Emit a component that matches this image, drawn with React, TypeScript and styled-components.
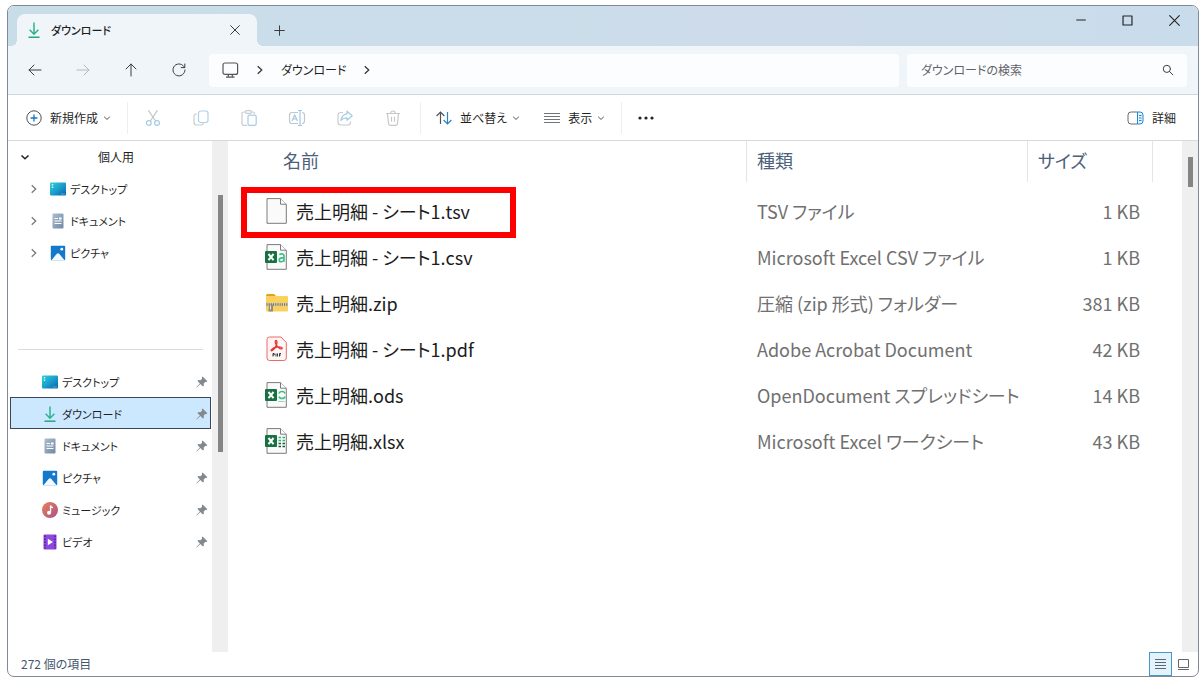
import React from "react";
import styled, { createGlobalStyle, css } from "styled-components";

const GlobalStyle = createGlobalStyle`
  *, *::before, *::after { box-sizing: border-box; }
  body {
    margin: 0;
    background: #ffffff;
    color: #1f1f1f;
    font-family: "Noto Sans CJK JP", "Noto Sans", sans-serif;
    font-size: 12px;
    line-height: 16px;
    font-feature-settings: "palt";
  }
  button, input {
    font: inherit;
    font-feature-settings: inherit;
    color: inherit;
    padding: 0;
    margin: 0;
    border: 0;
    background: none;
  }
  a { color: inherit; text-decoration: none; }
  ul { list-style: none; margin: 0; padding: 0; }
  svg { display: block; flex: none; }
`;

const Page = styled.div`
  min-height: 100vh;
  padding: 5px 5px 6px 7px;
  display: flex;
`;

const Window = styled.div`
  flex: 1;
  min-width: 0;
  display: flex;
  flex-direction: column;
  border: 1px solid #7f8a94;
  border-radius: 7px;
  overflow: hidden;
  background: #ffffff;
`;

/* Title bar */

const TitleBar = styled.header`
  height: 40px;
  display: flex;
  align-items: stretch;
  background: linear-gradient(90deg, #c9dde9 0%, #cbddea 45%, #cedbea 62%, #c9dceb 100%);
`;

const Tab = styled.div`
  position: relative;
  width: 240px;
  margin: 8px 0 0 9px;
  padding: 0 17px 0 9px;
  display: flex;
  align-items: center;
  gap: 9px;
  border-radius: 8px 8px 0 0;
  background: #eff5f9;

  &::before,
  &::after {
    content: "";
    position: absolute;
    bottom: 0;
    width: 6px;
    height: 6px;
  }
  &::before {
    right: 100%;
    background: radial-gradient(circle at 0 0, transparent 6px, #eff5f9 6px);
  }
  &::after {
    left: 100%;
    background: radial-gradient(circle at 100% 0, transparent 6px, #eff5f9 6px);
  }
`;

const TabTitle = styled.span`
  flex: 1;
  font-size: 11px;
  font-weight: 500;
`;

const BareButton = styled.button`
  display: flex;
  align-items: center;
  justify-content: center;
`;

const NewTabButton = styled(BareButton)`
  width: 32px;
  margin: 8px 0 0 6px;
`;

const CaptionButtons = styled.div`
  display: flex;
  margin-left: auto;
  height: 28px;
`;

const CaptionButton = styled(BareButton)`
  width: 47px;
`;

/* Address bar */

const AddressBar = styled.div`
  height: 49px;
  padding: 0 11px 0 3px;
  display: flex;
  align-items: center;
  border-bottom: 1px solid #cdd8df;
  background: #eff5f9;
`;

const NavButtons = styled.div`
  display: flex;
`;

const NavButton = styled(BareButton)`
  width: 48px;
  height: 32px;
`;

const Breadcrumb = styled.nav`
  flex: 1;
  height: 33px;
  margin-left: 6px;
  padding-left: 13px;
  display: flex;
  align-items: center;
  gap: 16px;
  border-radius: 4px;
  background: #fbfdfe;
`;

const SearchBox = styled.label`
  width: 280px;
  height: 33px;
  margin-left: 8px;
  padding: 0 13px 0 14px;
  display: flex;
  align-items: center;
  border-radius: 4px;
  background: #fbfdfe;
`;

const SearchInput = styled.input`
  flex: 1;
  min-width: 0;
  outline: none;

  &::placeholder {
    color: #5f6367;
    opacity: 1;
  }
`;

/* Command bar */

const CommandBar = styled.div`
  height: 46px;
  padding: 1px 22px 0 18px;
  display: flex;
  align-items: center;
  border-bottom: 1px solid #d3dae0;
`;

const CommandButton = styled(BareButton)`
  height: 32px;
  gap: 8px;
`;

const MenuLabel = styled.span`
  display: flex;
  align-items: center;
  gap: 5px;
`;

const IconCommand = styled(BareButton)`
  width: 48px;
  height: 32px;
`;

const Divider = styled.span<{ $before: number; $after: number }>`
  width: 1px;
  height: 32px;
  margin: 0 ${(p) => p.$after}px 0 ${(p) => p.$before}px;
  background: #eceeef;
`;

const Spacer = styled.span<{ $width?: number }>`
  ${(p) => (p.$width ? css`width: ${p.$width}px;` : css`flex: 1;`)}
`;

/* Body */

const Body = styled.div`
  flex: 1;
  display: flex;
`;

const Sidebar = styled.nav`
  width: 204px;
  padding-right: 1px;
`;

const ScrollTrack = styled.div<{ $top: number; $size: number }>`
  width: 16px;
  padding-top: ${(p) => p.$top}px;
  background: #efefef;

  &::before {
    content: "";
    display: block;
    width: 5px;
    height: ${(p) => p.$size}px;
    margin: 0 auto;
    background: #858585;
  }
`;

const GroupHeader = styled.button`
  width: 100%;
  height: 32px;
  padding-left: 12px;
  display: flex;
  align-items: center;
  gap: 68px;
`;

const TreeItem = styled.li`
  height: 32px;
  padding-left: 21px;
  display: flex;
  align-items: center;
  gap: 11px;
  font-size: 11px;
`;

const TreeLink = styled.a`
  display: flex;
  align-items: center;
  gap: 4px;
`;

const SidebarRule = styled.hr`
  margin: 80px 8px 15px 10px;
  border: 0;
  border-top: 1px solid #dcdcdc;
`;

const QuickLink = styled.a<{ $selected?: boolean }>`
  height: 32px;
  margin-left: 2px;
  padding: 1px 2px 0 31px;
  display: flex;
  align-items: center;
  gap: 4px;
  border: 1px solid ${(p) => (p.$selected ? "#3b4650" : "transparent")};
  background: ${(p) => (p.$selected ? "#cce8ff" : "transparent")};
  font-size: 11px;
`;

const QuickLabel = styled.span`
  flex: 1;
`;

const Files = styled.main`
  flex: 1;
  min-width: 0;
`;

/* File table */

const FileTable = styled.table`
  width: 100%;
  table-layout: fixed;
  border-collapse: collapse;
  font-size: 18px;
  line-height: 24px;
  color: #707070;
`;

const Col = styled.col<{ $width?: number }>`
  ${(p) => p.$width && css`width: ${p.$width}px;`}
`;

const HeadCell = styled.th`
  height: 48px;
  padding: 0;
  vertical-align: top;
  text-align: left;
  font-weight: 400;
  color: #4c607a;
`;

const HeadLabel = styled.span<{ $indent: number }>`
  height: 41px;
  padding: 0 0 3px ${(p) => p.$indent}px;
  display: flex;
  align-items: center;
  border-right: 1px solid #e3e5e8;
`;

const Cell = styled.td<{ $numeric?: boolean }>`
  height: 46px;
  padding: 0 ${(p) => (p.$numeric ? 13 : 0)}px 2px ${(p) => (p.$numeric ? 0 : 10)}px;
  text-align: ${(p) => (p.$numeric ? "right" : "left")};
  white-space: nowrap;
`;

const NameCell = styled(Cell)`
  position: relative;
  padding-left: 36px;
`;

const FileLink = styled.a`
  display: flex;
  align-items: center;
  gap: 8px;
  color: #1c1c1c;
`;

const Highlight = styled.span`
  position: absolute;
  top: -2px;
  left: 13px;
  width: 275px;
  height: 51px;
  border: 6px solid #fe0000;
  pointer-events: none;
`;

/* Status bar */

const StatusBar = styled.footer`
  height: 24px;
  padding: 0 3px 0 13px;
  display: flex;
  align-items: center;
  color: #44556e;
`;

const ViewButton = styled(BareButton)<{ $active?: boolean }>`
  width: 23px;
  height: 24px;
  border: 1px solid ${(p) => (p.$active ? "#4a97c2" : "transparent")};
  background: ${(p) => (p.$active ? "#e2f3fd" : "transparent")};
`;

/* Icons */

type StrokeProps = {
  d: string;
  size?: number;
  color?: string;
  width?: number;
};

const Stroke = ({ d, size = 16, color = "#3c3c3c", width = 1 }: StrokeProps) => (
  <svg width={size} height={size} viewBox="0 0 16 16" fill="none" stroke={color} strokeWidth={width} strokeLinecap="round" strokeLinejoin="round" aria-hidden="true">
    <path d={d} />
  </svg>
);

const Chevron = ({ dir, size = 8, color = "#555", width = 1 }: { dir: "down" | "right"; size?: number; color?: string; width?: number }) => (
  <svg width={size} height={size} viewBox="0 0 8 8" fill="none" stroke={color} strokeWidth={width} aria-hidden="true">
    <path d={dir === "down" ? "M1.2 2.8 4 5.4 6.800 2.800" : "M2.200 1 5.400 4 2.200 7"} />
  </svg>
);

const DownloadIcon = () => (
  <svg width="16" height="16" viewBox="0 0 16 16" fill="none" stroke="#2db391" strokeWidth="1.5" aria-hidden="true">
    <path d="M8 .5V12M3.6 7.8 8 12.2l4.4-4.4" />
    <path d="M2.5 15.2h11" stroke="#27a57f" />
  </svg>
);

const MonitorIcon = () => (
  <svg width="17" height="16" viewBox="0 0 17 16" fill="none" stroke="#555" strokeWidth="1.2" aria-hidden="true">
    <rect x="1" y="1" width="14.6" height="11.4" rx="2" />
    <path d="M6.3 12.5v2.3M10.3 12.5v2.3M4 15.2h8.6" />
  </svg>
);

const PlusCircleIcon = () => (
  <svg width="16" height="16" viewBox="0 0 16 16" fill="none" aria-hidden="true">
    <circle cx="8" cy="8" r="7.2" stroke="#4b5258" />
    <path d="M8 4.6v6.8M4.6 8h6.8" stroke="#1475c4" strokeWidth="1.3" />
  </svg>
);

const CutIcon = () => (
  <svg width="16" height="16" viewBox="0 0 16 16" fill="none" strokeWidth="1.2" aria-hidden="true">
    <path d="M3.4.3 10.6 11M12.4.3 5.4 11" stroke="#c3c6c9" />
    <circle cx="3.8" cy="13" r="2.4" stroke="#a5cbe8" />
    <circle cx="12" cy="13" r="2.4" stroke="#a5cbe8" />
  </svg>
);

const CopyIcon = () => (
  <svg width="16" height="16" viewBox="0 0 16 16" fill="none" strokeWidth="1.2" aria-hidden="true">
    <path d="M4 4H3.2Q1 4 1 6.2v6Q1 15 3.8 15h4.4q2 0 2.3-2" stroke="#c8cbce" />
    <rect x="5.5" y="1" width="9.5" height="11.5" rx="2.2" stroke="#aed1ec" />
  </svg>
);

const PasteIcon = () => (
  <svg width="16" height="16" viewBox="0 0 16 16" fill="none" strokeWidth="1.2" aria-hidden="true">
    <path d="M4.5 2H2.8Q1 2 1 3.8v9.7Q1 15.4 2.8 15.4H6M10.5 2h1.4q1.700 0 1.700 1.800" stroke="#c8cbce" />
    <rect x="4.5" y=".7" width="6" height="2.6" rx="1.2" stroke="#c8cbce" />
    <rect x="7" y="5.2" width="8.2" height="10.2" rx="1.6" stroke="#a5cbe8" />
  </svg>
);

const RenameIcon = () => (
  <svg width="18" height="16" viewBox="0 0 18 16" fill="none" strokeWidth="1.2" aria-hidden="true">
    <path d="M10 2.5H4Q1.5 2.5 1.5 5v6q0 2.5 2.5 2.5h6M14 2.5q2.5 0 2.5 2.5v6q0 2.5-2.5 2.5" stroke="#c3c6c9" />
    <path d="M4 11 6.7 5 9.4 11M5 9h3.4M12 .5v15M10 .5h4M10 15.5h4" stroke="#a0c8e8" />
  </svg>
);

const ShareIcon = () => (
  <svg width="16" height="16" viewBox="0 0 16 16" fill="none" strokeWidth="1.2" strokeLinejoin="round" aria-hidden="true">
    <path d="M6 2.500H4Q1 2.500 1 5.500v6.500q0 3 3 3h6.500q3 0 3-2.500v-1" stroke="#c8cbce" />
    <path d="M10 1.2 15.2 5.8 10 10.2V7.8Q6.300 7.600 4 10.500 4.800 4.600 10 3.900Z" stroke="#a5cbe8" />
  </svg>
);

const TrashIcon = () => (
  <svg width="16" height="16" viewBox="0 0 16 16" fill="none" stroke="#c6c8ca" strokeWidth="1.2" aria-hidden="true">
    <path d="M1 3.5h14M5.8 3.3Q5.8 1 8 1t2.2 2.3M2.5 3.6l1 9.6Q3.700 15.300 5.700 15.300h4.600q2 0 2.200-2.100l1-9.600M6.500 6.800v5M9.500 6.800v5" />
  </svg>
);

const SortIcon = () => (
  <svg width="16" height="14" viewBox="0 0 16 14" fill="none" strokeWidth="1.2" aria-hidden="true">
    <path d="M4.5 13V1.2M.6 5 4.5 1.100 8.400 5" stroke="#4f5357" />
    <path d="M11.5 1v11.8M7.6 9l3.900 3.900L15.400 9" stroke="#2f80c3" />
  </svg>
);

const LinesIcon = () => (
  <svg width="16" height="12" viewBox="0 0 16 12" stroke="#70757a" aria-hidden="true">
    <path d="M0 1.5h16M0 4.5h16M0 7.5h16M0 10.5h16" />
  </svg>
);

const DotsIcon = () => (
  <svg width="18" height="6" viewBox="0 0 18 6" fill="#222" aria-hidden="true">
    <circle cx="3" cy="3" r="1.6" />
    <circle cx="9" cy="3" r="1.6" />
    <circle cx="15" cy="3" r="1.6" />
  </svg>
);

const DetailsIcon = () => (
  <svg width="17" height="14" viewBox="0 0 17 14" fill="none" aria-hidden="true">
    <path d="M10.5 1H4Q1 1 1 4v6q0 3 3 3h6.5" stroke="#666b70" />
    <path d="M10.5 1H13q3 0 3 3v6q0 3-3 3h-2.500Z" stroke="#2487d2" fill="#e3f3ff" />
    <path d="M12 4.5h2.5M12 7h2.5M12 9.5h2.5" stroke="#2487d2" />
  </svg>
);

const DesktopIcon = () => (
  <svg width="16" height="16" viewBox="0 0 16 16" aria-hidden="true">
    <defs>
      <linearGradient id="desk" x1="0" y1="0" x2="1" y2="1">
        <stop offset="0" stopColor="#30cfd3" />
        <stop offset=".5" stopColor="#1a9fce" />
        <stop offset="1" stopColor="#0a62a9" />
      </linearGradient>
    </defs>
    <rect x="0" y="1.5" width="16" height="13" rx="1" fill="url(#desk)" />
    <path d="M1.8 3.7h1.4M1.8 6.3h1.4" stroke="#c9fbff" strokeWidth="1.4" />
    <path d="M11.5 13h1M13.5 13h1" stroke="#9fe0ff" />
  </svg>
);

const DocumentIcon = () => (
  <svg width="16" height="16" viewBox="0 0 16 16" aria-hidden="true">
    <defs>
      <linearGradient id="docu" x1="0" y1="0" x2="1" y2="1">
        <stop offset="0" stopColor="#adbfd0" />
        <stop offset="1" stopColor="#6f88a4" />
      </linearGradient>
    </defs>
    <rect x="2.5" y=".5" width="11" height="15" rx="1" fill="url(#docu)" />
    <path d="M4.5 5.5H8M4.5 8H11.5M4.5 10.5H11.5" stroke="#fff" />
    <rect x="9" y="4.5" width="2.6" height="2" fill="#fff" />
  </svg>
);

const PictureIcon = () => (
  <svg width="16" height="16" viewBox="0 0 16 16" aria-hidden="true">
    <rect x=".8" y=".8" width="14.4" height="14.4" rx="1" fill="#1478cb" />
    <path d="M1.5 15.2 6.6 9Q8 7.6 9.4 9l5.1 6.2Z" fill="#f3faff" />
    <circle cx="11.8" cy="4.2" r="1.4" fill="#f3faff" />
  </svg>
);

const MusicIcon = () => (
  <svg width="16" height="16" viewBox="0 0 16 16" aria-hidden="true">
    <defs>
      <linearGradient id="music" x1="0" y1="0" x2="1" y2="1">
        <stop offset="0" stopColor="#e98257" />
        <stop offset="1" stopColor="#a95188" />
      </linearGradient>
    </defs>
    <circle cx="8" cy="8" r="8" fill="url(#music)" />
    <path d="M8.5 10.5V3.5q.5 2 2.5 2.2" fill="none" stroke="#fff" strokeWidth="1.3" />
    <circle cx="7" cy="10.7" r="2" fill="#fff" />
  </svg>
);

const VideoIcon = () => (
  <svg width="16" height="16" viewBox="0 0 16 16" aria-hidden="true">
    <rect x="1.5" y=".5" width="13" height="15" rx="1" fill="#8d47dc" />
    <path d="M3 1.5v13M13 1.5v13" stroke="#4b1f91" strokeWidth="1.5" strokeDasharray="1.5 1.5" />
    <path d="M5.8 4.8 11 8l-5.2 3.2Z" fill="#fff" />
  </svg>
);

const PinIcon = () => (
  <svg width="12" height="12" viewBox="0 0 12 12" fill="#84898d" aria-hidden="true">
    <path d="M6.6.6 11.4 5.2 10.3 6.1 9.3 5.900 7.700 7.600 7.900 9.700 6.900 10.400 4.400 7.900 1 11.300.5 11.400.7 10.800 3.900 7.400 1.500 4.900 2.300 4 4.400 4.200 6.100 2.700 5.800 1.500Z" />
  </svg>
);

const Sheet = ({ children }: { children?: React.ReactNode }) => (
  <svg width="24" height="26" viewBox="0 0 24 26" fill="none" aria-hidden="true">
    <path d="M3 .6H16.500L22.300 6.200V25.300H3Z" fill="#fafafa" stroke="#7b7b7b" />
    <path d="M16.500 .6V6.200H22.300" fill="#fff" stroke="#7b7b7b" />
    {children}
  </svg>
);

const ExcelBadge = () => (
  <>
    <rect x="1" y="7" width="12" height="12" rx="1" fill="#187141" />
    <path d="M4.5 10 9.5 16.2M9.5 10 4.5 16.2" stroke="#fff" strokeWidth="2" />
  </>
);

const CsvIcon = () => (
  <Sheet>
    <ExcelBadge />
    <path d="M15.300 10.400Q20 8.800 20 12.200v5.600M20 13.600q-4.800 0-4.800 2.400 0 1.800 1.900 1.800 2.300 0 2.900-2.200" stroke="#36c184" strokeWidth="1.6" />
  </Sheet>
);

const OdsIcon = () => (
  <Sheet>
    <ExcelBadge />
    <path d="M15 11.500Q15.500 9.500 18 9.500T21 11.500M15 14.500Q15.500 16.500 18 16.500T21 14.500" stroke="#36c184" strokeWidth="1.5" />
    <path d="M14.500 19.500h6" stroke="#8fd9b5" />
  </Sheet>
);

const XlsxIcon = () => (
  <Sheet>
    <ExcelBadge />
    <path d="M14.500 9.500H17M18.500 9.500h2.500M14.500 12.500H17M18.500 12.500h2.500" stroke="#2fb277" strokeWidth="1.6" />
    <path d="M14.500 15.500H17M18.500 15.500h2.500M14.500 18.500H17M18.500 18.500h2.500" stroke="#185c37" strokeWidth="1.6" />
  </Sheet>
);

const PdfIcon = () => (
  <svg width="24" height="26" viewBox="0 0 24 26" fill="none" aria-hidden="true">
    <path d="M5.500 1H17L22.300 6.500V22q0 2.500-2.500 2.500H5.500Q3 24.500 3 22V3.500Q3 1 5.500 1Z" fill="#fff5f4" stroke="#ea6a64" />
    <path d="M12 4.500q1.600 0 .6 4-1.300 4.200-4.600 6.200-1.300.3-.8-.8 2-2.500 6-2.900 4.500-.4 5 1 .2 1.200-2.200.6-3-1.300-4.200-4.500-1.200-3.300.2-3.600Z" stroke="#e33a33" strokeWidth="1.300" />
    <path d="M9 20.500v-3h1.200v1.500H9M12 17.500v3M13.500 17.500v3M15.500 20.500v-3h1.500M15.500 19h1.300" stroke="#33383c" />
  </svg>
);

const ZipIcon = () => (
  <svg width="24" height="26" viewBox="0 0 24 26" aria-hidden="true">
    <path d="M2 5.500Q2 4 3.500 4H10L12.500 6.500H2Z" fill="#e3a11f" />
    <path d="M2 6H23q1 0 1 1V20.500q0 1-1 1H3q-1 0-1-1Z" fill="#fbd15c" />
    <path d="M2 12.500H24V16.500H2Z" fill="#d9cf9f" />
    <path d="M2.500 14.500H24" stroke="#77715b" strokeWidth="2.6" strokeDasharray="1 1.2" />
    <path d="M5 14.500H9V21.500H4.500Z" fill="#8f8b80" />
    <path d="M6.500 15.500v4" stroke="#e8e5da" />
  </svg>
);

/* Data */

const folders = {
  desktop: { label: "デスクトップ", Icon: DesktopIcon },
  downloads: { label: "ダウンロード", Icon: DownloadIcon },
  documents: { label: "ドキュメント", Icon: DocumentIcon },
  pictures: { label: "ピクチャ", Icon: PictureIcon },
  music: { label: "ミュージック", Icon: MusicIcon },
  videos: { label: "ビデオ", Icon: VideoIcon },
};

const personal = [folders.desktop, folders.documents, folders.pictures];
const pinned = Object.values(folders);

const files = [
  { name: "売上明細 - シート1.tsv", kind: "TSV ファイル", size: "1 KB", Icon: Sheet, marked: true },
  { name: "売上明細 - シート1.csv", kind: "Microsoft Excel CSV ファイル", size: "1 KB", Icon: CsvIcon },
  { name: "売上明細.zip", kind: "圧縮 (zip 形式) フォルダー", size: "381 KB", Icon: ZipIcon },
  { name: "売上明細 - シート1.pdf", kind: "Adobe Acrobat Document", size: "42 KB", Icon: PdfIcon },
  { name: "売上明細.ods", kind: "OpenDocument スプレッドシート", size: "14 KB", Icon: OdsIcon },
  { name: "売上明細.xlsx", kind: "Microsoft Excel ワークシート", size: "43 KB", Icon: XlsxIcon },
];

const editCommands = [
  { label: "切り取り", Icon: CutIcon },
  { label: "コピー", Icon: CopyIcon },
  { label: "貼り付け", Icon: PasteIcon },
  { label: "名前の変更", Icon: RenameIcon },
  { label: "共有", Icon: ShareIcon },
  { label: "削除", Icon: TrashIcon },
];

export default function App() {
  return (
    <Page>
      <GlobalStyle />
      <Window>
        <TitleBar>
          <Tab>
            <DownloadIcon />
            <TabTitle>ダウンロード</TabTitle>
            <BareButton aria-label="タブを閉じる">
              <Stroke size={10} width={1.6} d="M1 1 15 15M15 1 1 15" />
            </BareButton>
          </Tab>
          <NewTabButton aria-label="新しいタブ">
            <Stroke size={11} width={1.5} d="M8 1V15M1 8H15" />
          </NewTabButton>
          <CaptionButtons>
            <CaptionButton aria-label="最小化">
              <Stroke size={10} width={1.7} color="#222" d="M1 8H15" />
            </CaptionButton>
            <CaptionButton aria-label="最大化">
              <Stroke size={11} width={1.7} color="#222" d="M1.5 1.5H14.5V14.5H1.5Z" />
            </CaptionButton>
            <CaptionButton aria-label="閉じる">
              <Stroke size={11} width={1.6} color="#222" d="M1 1 15 15M15 1 1 15" />
            </CaptionButton>
          </CaptionButtons>
        </TitleBar>

        <AddressBar>
          <NavButtons>
            <NavButton aria-label="戻る">
              <Stroke d="M14 8H2M7 3 2 8l5 5" />
            </NavButton>
            <NavButton aria-label="進む">
              <Stroke color="#b3b9be" d="M2 8H14M9 3l5 5-5 5" />
            </NavButton>
            <NavButton aria-label="上へ">
              <Stroke d="M8 14V2M3 7 8 2l5 5" />
            </NavButton>
            <NavButton aria-label="更新">
              <Stroke d="M13.5 5.5A6 6 0 1 0 14 8M13.8 2V5.600H10.200" />
            </NavButton>
          </NavButtons>
          <Breadcrumb aria-label="アドレス">
            <MonitorIcon />
            <Chevron dir="right" size={10} color="#333" />
            <a href="#downloads">ダウンロード</a>
            <Chevron dir="right" size={10} color="#333" />
          </Breadcrumb>
          <SearchBox>
            <SearchInput type="search" placeholder="ダウンロードの検索" aria-label="ダウンロードの検索" />
            <Stroke size={12} width={1.3} d="M11.3 6.5A4.800 4.800 0 1 1 1.700 6.500 4.800 4.800 0 0 1 11.300 6.500M10 10l4.500 4.500" />
          </SearchBox>
        </AddressBar>

        <CommandBar role="toolbar" aria-label="コマンド バー">
          <CommandButton>
            <PlusCircleIcon />
            <MenuLabel>
              新規作成
              <Chevron dir="down" />
            </MenuLabel>
          </CommandButton>
          <Divider $before={16} $after={1} />
          {editCommands.map(({ label, Icon }) => (
            <IconCommand key={label} aria-label={label} disabled>
              <Icon />
            </IconCommand>
          ))}
          <Divider $before={3} $after={15} />
          <CommandButton>
            <SortIcon />
            <MenuLabel>
              並べ替え
              <Chevron dir="down" />
            </MenuLabel>
          </CommandButton>
          <Spacer $width={24} />
          <CommandButton>
            <LinesIcon />
            <MenuLabel>
              表示
              <Chevron dir="down" />
            </MenuLabel>
          </CommandButton>
          <Divider $before={16} $after={15} />
          <CommandButton aria-label="その他">
            <DotsIcon />
          </CommandButton>
          <Spacer />
          <CommandButton>
            <DetailsIcon />
            詳細
          </CommandButton>
        </CommandBar>

        <Body>
          <Sidebar aria-label="ナビゲーション">
            <GroupHeader>
              <Chevron dir="down" size={10} color="#222" width={1.3} />
              個人用
            </GroupHeader>
            <ul>
              {personal.map(({ label, Icon }) => (
                <TreeItem key={label}>
                  <BareButton aria-label={`${label}を展開`}>
                    <Chevron dir="right" size={10} color="#777" />
                  </BareButton>
                  <TreeLink href="#">
                    <Icon />
                    {label}
                  </TreeLink>
                </TreeItem>
              ))}
            </ul>
            <SidebarRule />
            <ul>
              {pinned.map(({ label, Icon }) => (
                <li key={label}>
                  <QuickLink href="#" $selected={label === "ダウンロード"}>
                    <Icon />
                    <QuickLabel>{label}</QuickLabel>
                    <PinIcon />
                  </QuickLink>
                </li>
              ))}
            </ul>
          </Sidebar>
          <ScrollTrack $top={54} $size={257} />

          <Files>
            <FileTable>
              <colgroup>
                <Col />
                <Col $width={281} />
                <Col $width={125} />
                <Col $width={29} />
              </colgroup>
              <thead>
                <tr>
                  <HeadCell scope="col"><HeadLabel $indent={55}>名前</HeadLabel></HeadCell>
                  <HeadCell scope="col"><HeadLabel $indent={10}>種類</HeadLabel></HeadCell>
                  <HeadCell scope="col"><HeadLabel $indent={10}>サイズ</HeadLabel></HeadCell>
                  <td />
                </tr>
              </thead>
              <tbody>
                {files.map(({ name, kind, size, Icon, marked }) => (
                  <tr key={name}>
                    <NameCell>
                      <FileLink href="#">
                        <Icon />
                        {name}
                      </FileLink>
                      {marked && <Highlight />}
                    </NameCell>
                    <Cell>{kind}</Cell>
                    <Cell $numeric>{size}</Cell>
                    <td />
                  </tr>
                ))}
              </tbody>
            </FileTable>
          </Files>
          <ScrollTrack $top={16} $size={30} />
        </Body>

        <StatusBar>
          <span>272 個の項目</span>
          <Spacer />
          <ViewButton $active aria-label="詳細表示">
            <svg width="11" height="12" viewBox="0 0 11 12" stroke="#60666b" aria-hidden="true">
              <path d="M0 1.5h11M0 4.5h11M0 7.5h11M0 10.5h11" />
            </svg>
          </ViewButton>
          <ViewButton aria-label="縮小表示">
            <svg width="13" height="12" viewBox="0 0 13 12" fill="none" stroke="#60666b" aria-hidden="true">
              <path d="M1.5 1.5h10v8h-10ZM1 11.5h11" />
            </svg>
          </ViewButton>
        </StatusBar>
      </Window>
    </Page>
  );
}
